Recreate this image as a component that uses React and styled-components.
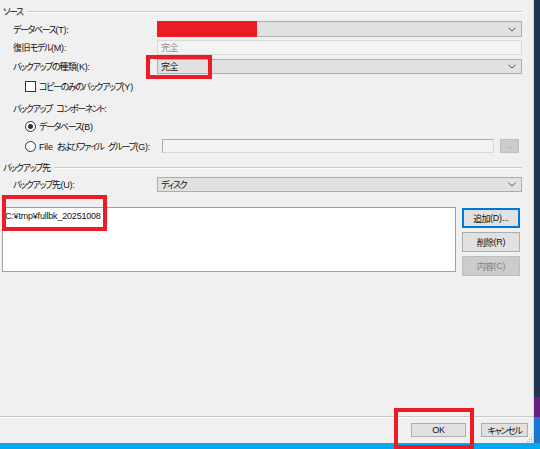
import React from "react";
import styled, { createGlobalStyle } from "styled-components";

const Global = createGlobalStyle`
  html, body { margin: 0; padding: 0; background: #233450; }
  body {
    font-family: "Liberation Sans", "Noto Sans CJK JP", sans-serif;
    font-size: 9px;
    font-feature-settings: "palt";
    letter-spacing: -0.2px;
    color: #111;
    overflow: hidden;
  }
  * { box-sizing: border-box; }
`;

const Screen = styled.div`
  position: relative;
  width: 540px;
  height: 449px;
  display: grid;
  grid-template-columns: 534px 6px;
  grid-template-rows: 443px 6px;
  overflow: hidden;
`;

const Window = styled.div`
  background: #f0f0f0;
  border-right: 1px solid #d4d4d4;
  display: flex;
  flex-direction: column;
  position: relative;
`;

const SideStrip = styled.div`
  background: linear-gradient(
    to bottom,
    #233450 0 397px,
    #6a1f7c 397px 417px,
    #1979cf 417px 100%
  );
`;

const Taskbar = styled.div`
  grid-column: 1 / -1;
  background: #04aaef;
`;

const SectionHeader = styled.div`
  display: flex;
  align-items: center;
  gap: 4px;
  height: ${(p) => p.$h}px;
  margin-top: ${(p) => p.$mt}px;
  padding: 0 11px 0 3px;
  white-space: nowrap;
  &::after {
    content: "";
    flex: 1;
    border-top: 1px solid #c9c9c9;
    border-bottom: 1px solid #ffffff;
    margin-top: 1px;
  }
`;

const Row = styled.div`
  display: grid;
  grid-template-columns: 144px 1fr;
  align-items: center;
  height: ${(p) => p.$h}px;
  margin-top: ${(p) => p.$mt}px;
  padding: 0 11px 0 13px;
  white-space: nowrap;
`;

const Combo = styled.div`
  height: 100%;
  display: flex;
  align-items: center;
  background: #e1e1e1;
  border: 1px solid #adadad;
  padding-right: 5px;
`;

const ComboText = styled.span`
  flex: 1;
  padding-left: 3px;
`;

const Redaction = styled.span`
  align-self: stretch;
  width: 100px;
  margin: -1px 0 -1px -1px;
  background: #ed1c24;
`;

const ReadOnlyBox = styled.div`
  height: 100%;
  display: flex;
  align-items: center;
  background: #f3f3f3;
  border: 1px solid #d9d9d9;
  color: #8d8d8d;
  padding-left: 3px;
`;

const Chevron = () => (
  <svg width="8" height="5" viewBox="0 0 8 5">
    <path d="M0.5 0.8 L4 4 L7.5 0.8" fill="none" stroke="#555" strokeWidth="1" />
  </svg>
);

const OptionRow = styled.div`
  display: flex;
  align-items: center;
  gap: 3px;
  height: ${(p) => p.$h}px;
  margin-top: ${(p) => p.$mt}px;
  padding-left: ${(p) => p.$indent}px;
  white-space: nowrap;
`;

const CheckBox = styled.span`
  width: 11px;
  height: 11px;
  border: 1px solid #333;
  background: #fff;
  flex: none;
`;

const Radio = styled.span`
  width: 11px;
  height: 11px;
  border: 1px solid #333;
  border-radius: 50%;
  background: #fff;
  flex: none;
  display: flex;
  align-items: center;
  justify-content: center;
  &::after {
    content: "";
    width: 5px;
    height: 5px;
    border-radius: 50%;
    background: ${(p) => (p.$checked ? "#333" : "transparent")};
  }
`;

const FileRow = styled.div`
  display: grid;
  grid-template-columns: 131px 332px 19px;
  column-gap: 6px;
  align-items: center;
  height: 14px;
  margin-top: ${(p) => p.$mt}px;
  padding-left: 25px;
  white-space: nowrap;
`;

const RadioLabel = styled.label`
  display: flex;
  align-items: center;
  gap: 3px;
  overflow: hidden;
`;

const Kana = styled.span`
  letter-spacing: -1.4px;
`;

const Kanji = styled.span`
  letter-spacing: -0.6px;
`;

const Latin = styled.span`
  letter-spacing: -0.2px;
  word-spacing: 2px;
`;

const KANA = /[\u3040-\u30FF]/;
const KANJI = /[\u4E00-\u9FFF]/;

const Txt = ({ children }) =>
  String(children)
    .split(/([\u3040-\u30FF]+|[\u4E00-\u9FFF]+)/)
    .filter(Boolean)
    .map((part, i) =>
      KANA.test(part) ? (
        <Kana key={i}>{part}</Kana>
      ) : KANJI.test(part) ? (
        <Kanji key={i}>{part}</Kanji>
      ) : (
        <Latin key={i}>{part}</Latin>
      )
    );

const TextInput = styled.div`
  height: 14px;
  background: #f3f3f3;
  border: 1px solid #acacac;
  border-right-color: #d8d8d8;
  border-bottom-color: #d8d8d8;
`;

const SmallButton = styled.div`
  height: 14px;
  background: #cccccc;
  border: 1px solid #bfbfbf;
  color: #9a9a9a;
  display: flex;
  align-items: flex-end;
  justify-content: center;
  font-size: 7px;
  letter-spacing: 0;
  line-height: 1;
  padding-bottom: 3px;
`;

const DestArea = styled.div`
  display: flex;
  gap: 6px;
  margin-top: ${(p) => p.$mt}px;
  padding-left: 2px;
`;

const ListBox = styled.div`
  width: 454px;
  height: 65px;
  background: #fff;
  border: 1px solid #a0a0a0;
  padding: 3px 2px;
  font-size: 9px;
  letter-spacing: -0.2px;
`;

const ButtonStack = styled.div`
  display: flex;
  flex-direction: column;
  gap: 4px;
  margin-top: 1px;
`;

const Button = styled.div`
  width: ${(p) => p.$w}px;
  height: ${(p) => p.$h}px;
  display: flex;
  align-items: center;
  justify-content: center;
  white-space: nowrap;
  background: ${(p) => (p.$disabled ? "#cccccc" : "#e1e1e1")};
  color: ${(p) => (p.$disabled ? "#838383" : "#111")};
  border: 1px solid
    ${(p) => (p.$focused ? "#0078d7" : p.$disabled ? "#bfbfbf" : "#adadad")};
  box-shadow: ${(p) => (p.$focused ? "inset 0 0 0 1px #0078d7" : "none")};
`;

const Spacer = styled.div`
  flex: 1;
`;

const Footer = styled.div`
  display: flex;
  justify-content: flex-end;
  gap: 15px;
  border-top: 1px solid #c8c8c8;
  box-shadow: inset 0 1px 0 #fafafa;
  padding: 6px 5px 6px 0;
`;

const Grip = styled.svg`
  position: absolute;
  right: 1px;
  bottom: 1px;
`;

const Annotation = styled.div`
  position: absolute;
  left: ${(p) => p.$x}px;
  top: ${(p) => p.$y}px;
  width: ${(p) => p.$w}px;
  height: ${(p) => p.$h}px;
  border: 4px solid #ed1c24;
  pointer-events: none;
`;

export default function App() {
  return (
    <>
      <Global />
      <Screen>
        <Window>
          <SectionHeader $h={13} $mt={5}>
            <span><Txt>ソース</Txt></span>
          </SectionHeader>
          <Row $h={16} $mt={3}>
            <span><Txt>データベース(T):</Txt></span>
            <Combo>
              <Redaction />
              <ComboText />
              <Chevron />
            </Combo>
          </Row>
          <Row $h={14} $mt={3}>
            <span><Txt>復旧モデル(M):</Txt></span>
            <ReadOnlyBox><Txt>完全</Txt></ReadOnlyBox>
          </Row>
          <Row $h={15} $mt={5}>
            <span><Txt>バックアップの種類(K):</Txt></span>
            <Combo>
              <ComboText><Txt>完全</Txt></ComboText>
              <Chevron />
            </Combo>
          </Row>
          <OptionRow $h={12} $mt={6} $indent={25}>
            <CheckBox />
            <span><Txt>コピーのみのバックアップ(Y)</Txt></span>
          </OptionRow>
          <OptionRow $h={14} $mt={9} $indent={13}>
            <span><Txt>バックアップ コンポーネント:</Txt></span>
          </OptionRow>
          <OptionRow $h={14} $mt={4} $indent={25}>
            <Radio $checked />
            <span><Txt>データベース(B)</Txt></span>
          </OptionRow>
          <FileRow $mt={6}>
            <RadioLabel>
              <Radio />
              <span><Txt>File およびファイル グループ(G):</Txt></span>
            </RadioLabel>
            <TextInput />
            <SmallButton>...</SmallButton>
          </FileRow>
          <SectionHeader $h={12} $mt={8}>
            <span><Txt>バックアップ先</Txt></span>
          </SectionHeader>
          <Row $h={15} $mt={4}>
            <span><Txt>バックアップ先(U):</Txt></span>
            <Combo>
              <ComboText><Txt>ディスク</Txt></ComboText>
              <Chevron />
            </Combo>
          </Row>
          <DestArea $mt={15}>
            <ListBox>C:¥tmp¥fullbk_20251008</ListBox>
            <ButtonStack>
              <Button $w={58} $h={20} $focused><Txt>追加(D)...</Txt></Button>
              <Button $w={58} $h={20}><Txt>削除(R)</Txt></Button>
              <Button $w={58} $h={20} $disabled><Txt>内容(C)</Txt></Button>
            </ButtonStack>
          </DestArea>
          <Spacer />
          <Footer>
            <Button $w={55} $h={14}><Txt>OK</Txt></Button>
            <Button $w={47} $h={14}><Txt>キャンセル</Txt></Button>
          </Footer>
          <Grip width="5" height="5" viewBox="0 0 5 5">
            <rect x="4" y="0" width="1" height="1" fill="#a8a8a8" />
            <rect x="2" y="2" width="1" height="1" fill="#a8a8a8" />
            <rect x="4" y="2" width="1" height="1" fill="#a8a8a8" />
            <rect x="0" y="4" width="1" height="1" fill="#a8a8a8" />
            <rect x="2" y="4" width="1" height="1" fill="#a8a8a8" />
            <rect x="4" y="4" width="1" height="1" fill="#a8a8a8" />
          </Grip>
        </Window>
        <SideStrip />
        <Taskbar />
        <Annotation $x={146} $y={55} $w={66} $h={24} />
        <Annotation $x={2} $y={195} $w={105} $h={36} />
        <Annotation $x={394} $y={408} $w={80} $h={41} />
      </Screen>
    </>
  );
}
